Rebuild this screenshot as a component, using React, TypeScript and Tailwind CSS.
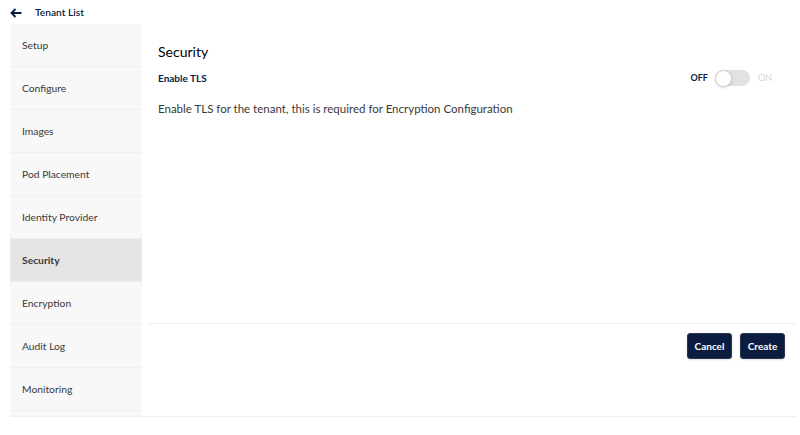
const menu = [
  "Setup",
  "Configure",
  "Images",
  "Pod Placement",
  "Identity Provider",
  "Security",
  "Encryption",
  "Audit Log",
  "Monitoring",
];

function BackArrow() {
  return (
    <svg width="12" height="10" viewBox="0 0 12 10" fill="none" className="text-[#081c42]">
      <path d="M11.5 5H1.5M5.5 1L1.5 5L5.5 9" stroke="currentColor" strokeWidth="1.8" />
    </svg>
  );
}

export default function App() {
  const active = "Security";

  return (
    <div className="h-[435px] w-[800px] bg-white font-['Lato',sans-serif] text-[#393939]">
      <header className="flex h-[24px] items-center pl-[10px] pt-[1px]">
        <BackArrow />
        <span className="ml-[13px] text-[10.2px] font-semibold text-[#081c42]">Tenant List</span>
      </header>

      <div className="ml-[10px] mr-[3px] flex h-[393px] border-b border-[#f0f0f0]">
        <nav className="w-[132px] shrink-0 bg-[#f8f8f8]">
          {menu.map((item) => (
            <div
              key={item}
              className={
                item === active
                  ? "flex h-[43px] items-center border-b border-[#ececec] bg-[#e5e5e5] pl-3 pt-[1px] text-[10.3px] font-bold text-[#393939]"
                  : "flex h-[43px] items-center border-b border-[#efefef] pl-3 pt-[1px] text-[10.3px] text-[#393939]"
              }
            >
              {item}
            </div>
          ))}
        </nav>

        <main className="flex flex-1 flex-col">
          <section className="h-[299px] pl-[16px] pr-[25px] pt-[18px]">
            <h1 className="text-[14px] leading-[20px] text-black">Security</h1>
            <div className="mt-[8px] flex h-[16px] items-center justify-between">
              <span className="text-[10px] font-bold text-[#081c42]">Enable TLS</span>
              <div className="flex items-center">
                <span className="text-[9px] font-bold text-[#081c42]">OFF</span>
                <div className="ml-[7px] flex h-[16px] w-[35px] items-center rounded-full bg-[#e2e2e2]">
                  <div className="h-[17px] w-[17px] rounded-full border border-[#cfcfcf] bg-white shadow-sm" />
                </div>
                <span className="ml-[8px] text-[9px] text-[#d4d4d4]">ON</span>
              </div>
            </div>
            <p className="mt-[14px] text-[11.5px] text-[#393939]">
              Enable TLS for the tenant, this is required for Encryption Configuration
            </p>
          </section>
          <div className="ml-[6px] border-b border-[#f0f0f0]" />
          <footer className="flex justify-end gap-[8px] pr-[12px] pt-[9px]">
            <button className="h-[26px] w-[45px] rounded-[3px] border border-[#2b3550] bg-[#0b1c40] text-[10px] font-bold text-white shadow-sm">
              Cancel
            </button>
            <button className="h-[26px] w-[45px] rounded-[3px] border border-[#2b3550] bg-[#0b1c40] text-[10px] font-bold text-white shadow-sm">
              Create
            </button>
          </footer>
        </main>
      </div>
    </div>
  );
}
